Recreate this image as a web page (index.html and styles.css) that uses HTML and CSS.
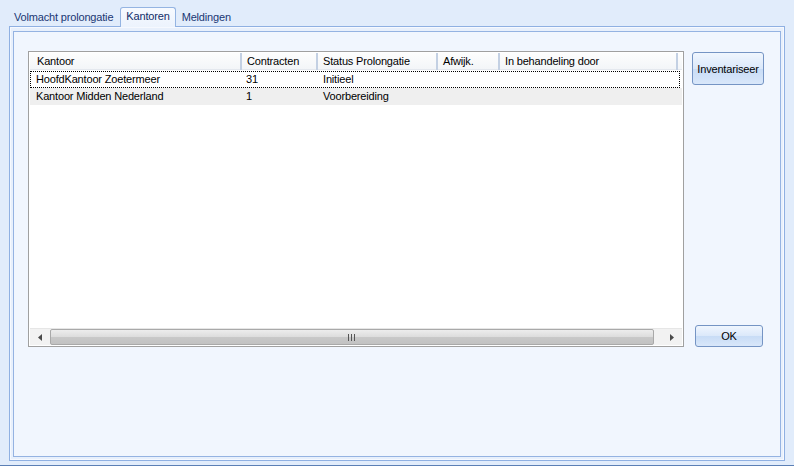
FILE: index.html
```html
<!DOCTYPE html>
<html>
<head>
<meta charset="utf-8">
<link rel="stylesheet" href="styles.css">
</head>
<body>
<div class="window">
  <div class="tabs">
    <div class="tab tab-first">Volmacht prolongatie</div>
    <div class="tab tab-active">Kantoren</div>
    <div class="tab">Meldingen</div>
  </div>
  <div class="page">
    <div class="panel">
      <div class="list">
        <div class="list-head">
          <div class="hcell c1">Kantoor</div>
          <div class="hcell c2">Contracten</div>
          <div class="hcell c3">Status Prolongatie</div>
          <div class="hcell c4">Afwijk.</div>
          <div class="hcell c5">In behandeling door</div>
        </div>
        <div class="rows">
          <div class="row row-focus">
            <div class="cell c1">HoofdKantoor Zoetermeer</div>
            <div class="cell c2">31</div>
            <div class="cell c3">Initieel</div>
            <div class="cell c4"></div>
            <div class="cell c5"></div>
          </div>
          <div class="row row-alt">
            <div class="cell c1">Kantoor Midden Nederland</div>
            <div class="cell c2">1</div>
            <div class="cell c3">Voorbereiding</div>
            <div class="cell c4"></div>
            <div class="cell c5"></div>
          </div>
        </div>
        <div class="hscroll">
          <div class="arrow">
            <svg width="4" height="7" viewBox="0 0 4 7"><path d="M4 0 L0 3.5 L4 7 Z" fill="#4a4a4a"/></svg>
          </div>
          <div class="thumb">
            <div class="grip"><span></span><span></span><span></span></div>
          </div>
          <div class="arrow arrow-right">
            <svg width="4" height="7" viewBox="0 0 4 7"><path d="M0 0 L4 3.5 L0 7 Z" fill="#4a4a4a"/></svg>
          </div>
        </div>
      </div>
      <div class="actions">
        <button class="btn btn-inv">Inventariseer</button>
        <button class="btn btn-ok">OK</button>
      </div>
    </div>
  </div>
</div>
</body>
</html>
```
FILE: styles.css
```css
* { box-sizing: border-box; }
html, body { margin: 0; padding: 0; }
body {
  font-family: "Liberation Sans", Arial, sans-serif;
  font-size: 11px;
  letter-spacing: -0.17px;
  color: #000;
  background: #e1ecfb;
}
.window {
  width: 794px;
  height: 466px;
  background: #e1ecfb;
  border-bottom: 1px solid #5b7fb5;
  display: flex;
  flex-direction: column;
}
.tabs {
  height: 26px;
  display: flex;
  align-items: flex-end;
  padding-left: 9px;
  position: relative;
  z-index: 2;
}
.tab {
  height: 18px;
  padding: 3px 6px 0 6px;
  color: #1a3773;
  line-height: 13px;
}
.tab-first { padding: 3px 7px 0 5px; }
.tab-active {
  height: 20px;
  margin-bottom: -1px;
  padding: 2px 5px 0 5px;
  background: linear-gradient(#f7faff, #ecf3fd);
  border: 1px solid #94b4e2;
  border-bottom: none;
  border-radius: 3px 3px 0 0;
  color: #102c68;
}
.page {
  margin: 0 9px 0 9px;
  height: 435px;
  border: 1px solid #8fb0e2;
  box-shadow: inset 0 0 0 1px #f6f9ff;
  padding: 4px 3px 3px 3px;
  background: #e8f0fc;
}
.panel {
  height: 100%;
  border: 1px solid #95b3e2;
  background: #f1f6fe;
  display: flex;
  padding: 19px 16px 0 14px;
  gap: 8px;
}
.list {
  width: 656px;
  height: 296px;
  border: 1px solid #a0a0a0;
  background: #fff;
  display: flex;
  flex-direction: column;
  padding: 1px;
}
.list-head {
  display: flex;
  height: 17px;
  background: linear-gradient(#fdfdfd, #f3f5f8);
  border-bottom: 1px solid #e4e8ee;
}
.hcell {
  height: 17px;
  padding: 2px 0 0 5px;
  border-right: 2px solid #c3d0e3;
  white-space: nowrap;
  line-height: 13px;
}
.hcell.c1 { padding-left: 7px; }
.c1 { width: 212px; }
.c2 { width: 76px; }
.c3 { width: 120px; }
.c4 { width: 62px; }
.c5 { width: 178px; }
.rows {
  flex: 1;
  display: flex;
  flex-direction: column;
  padding-top: 1px;
}
.row {
  display: flex;
  height: 17px;
  line-height: 15px;
}
.cell {
  padding-left: 5px;
  white-space: nowrap;
}
.cell.c1 { padding-left: 6px; }
.cell.c2 { padding-left: 4px; }
.row-focus {
  border: 1px dotted #000;
  margin-right: 2px;
}
.row-focus .cell.c1 { padding-left: 5px; width: 211px; }
.row-alt {
  background: #efefef;
  line-height: 16px;
}
.hscroll {
  height: 17px;
  display: flex;
  background: #f2f2f2;
  border-top: 1px solid #e6e6e6;
}
.arrow {
  width: 20px;
  display: flex;
  align-items: center;
  justify-content: center;
}
.arrow-right { width: 28px; padding-left: 8px; }
.thumb {
  flex: 1;
  border: 1px solid #a9a9a9;
  border-radius: 2px;
  background: linear-gradient(#ededed, #dcdcdc 50%, #c8c8c8 51%, #c2c2c2);
  display: flex;
  align-items: center;
  justify-content: center;
}
.grip { display: flex; gap: 1px; }
.grip span { width: 1px; height: 7px; background: #555; margin-right: 1px; }
.actions {
  display: flex;
  flex-direction: column;
  justify-content: space-between;
  height: 296px;
  padding-top: 1px;
}
.btn {
  font-family: "Liberation Sans", Arial, sans-serif;
  font-size: 11px;
  letter-spacing: -0.17px;
  color: #000;
  border: 1px solid #7594c4;
  border-radius: 3px;
  background: linear-gradient(#f0f6fe, #dbe8fa 50%, #c8dcf6 51%, #d9e7fa);
  padding: 0;
}
.btn-inv { width: 72px; height: 33px; }
.btn-ok { width: 68px; height: 22px; margin-left: 3px; }
```
